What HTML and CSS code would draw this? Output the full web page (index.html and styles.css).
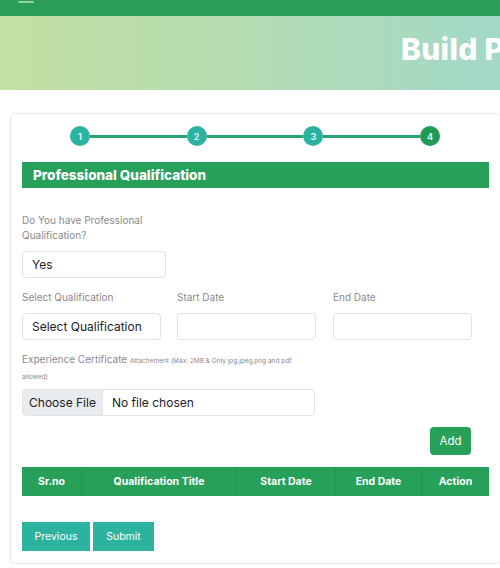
FILE: index.html
```html
<!DOCTYPE html>
<html lang="en">
    <head>
        <meta charset="UTF-8">
        <meta name="viewport" content="width=device-width, initial-scale=1.0">
        <title>Build Profile</title>
        <link rel="stylesheet" href="styles.css">
    </head>
    <body>
        <div class="topbar"><span class="menu-line"></span></div>
        <div class="hero">
            <h1>Build Profile</h1>
        </div>

        <div class="card">
            <div class="stepper">
                <span class="step">1</span>
                <span class="step-line"></span>
                <span class="step">2</span>
                <span class="step-line"></span>
                <span class="step">3</span>
                <span class="step-line"></span>
                <span class="step active">4</span>
            </div>

            <div class="section-title">Professional Qualification</div>

            <label class="field-label question">Do You have Professional Qualification?</label>
            <div class="box yes-box">Yes</div>

            <div class="row">
                <div class="col">
                    <label class="field-label">Select Qualification</label>
                    <div class="box">Select Qualification</div>
                </div>
                <div class="col">
                    <label class="field-label">Start Date</label>
                    <div class="box"></div>
                </div>
                <div class="col">
                    <label class="field-label">End Date</label>
                    <div class="box"></div>
                </div>
            </div>

            <label class="field-label cert-label">Experience Certificate <small>Attachement (Max: 2MB &amp; Only jpg,jpeg,png and pdf allowed)</small></label>
            <div class="file-box">
                <span class="file-btn">Choose File</span>
                <span class="file-name">No file chosen</span>
            </div>

            <div class="add-row">
                <button class="btn-add">Add</button>
            </div>

            <table class="qual-table">
                <thead>
                    <tr>
                        <th class="c1">Sr.no</th>
                        <th class="c2">Qualification Title</th>
                        <th class="c3">Start Date</th>
                        <th class="c4">End Date</th>
                        <th class="c5">Action</th>
                    </tr>
                </thead>
            </table>

            <div class="nav-buttons">
                <button class="btn-teal prev">Previous</button>
                <button class="btn-teal submit">Submit</button>
            </div>
        </div>
    </body>
</html>
```

FILE: styles.css
```css
body {
    margin: 0;
    font-family: Inter, "Noto Sans", sans-serif;
    background-color: #ffffff;
    overflow: hidden;
    width: 500px;
}

.topbar {
    height: 16px;
    background-color: #2a9d58;
    position: relative;
}

.menu-line {
    position: absolute;
    left: 18px;
    top: 1px;
    width: 16px;
    height: 2px;
    border-radius: 1px;
    background-color: #8fd3a8;
}

.hero {
    height: 74px;
    background: linear-gradient(90deg, #c3e0a3 0%, #b5dcb0 45%, #a3d9c8 100%);
    overflow: hidden;
}

.hero h1 {
    margin: 0;
    padding: 15px 0 0 401px;
    white-space: nowrap;
    color: #ffffff;
    font-size: 30px;
    font-weight: 800;
    letter-spacing: 0.3px;
}

.card {
    margin: 23px 0 0 10px;
    width: 467px;
    padding: 12px 11px 12px 11px;
    border: 1px solid #e8e8e8;
    border-radius: 5px;
    box-shadow: 0 1px 4px rgba(0, 0, 0, 0.06);
}

.stepper {
    display: flex;
    align-items: center;
    margin-left: 48px;
    width: 370px;
}

.step {
    width: 20px;
    height: 20px;
    border-radius: 50%;
    background-color: #2bb39f;
    color: #d9f3ee;
    font-size: 9px;
    font-weight: 700;
    display: flex;
    align-items: center;
    justify-content: center;
    flex-shrink: 0;
}

.step.active {
    background-color: #219a55;
}

.step-line {
    flex: 1;
    height: 3px;
    background-color: #27a472;
}

.section-title {
    margin-top: 16px;
    height: 26px;
    line-height: 26px;
    background-color: #27a05a;
    color: #ffffff;
    font-size: 13.5px;
    font-weight: 800;
    padding-left: 11px;
}

.field-label {
    display: block;
    font-size: 10px;
    line-height: 15px;
    color: #8a8a8a;
}

.question {
    margin-top: 25px;
    width: 140px;
}

.box {
    height: 25px;
    border: 1px solid #e2e2e2;
    border-radius: 4px;
    font-size: 12px;
    line-height: 25px;
    padding-left: 9px;
    color: #222;
    box-sizing: content-box;
}

.yes-box {
    margin-top: 8px;
    width: 133px;
}

.row {
    display: grid;
    grid-template-columns: 155px 156px 156px;
    margin-top: 12px;
}

.row .field-label {
    margin-bottom: 8px;
}

.row .box {
    width: 128px;
}

.cert-label {
    margin-top: 11px;
    line-height: 16px;
    width: 282px;
}

.cert-label small {
    font-size: 6.5px;
    line-height: 10px;
}

.file-box {
    margin-top: 6px;
    width: 291px;
    height: 25px;
    border: 1px solid #e2e2e2;
    border-radius: 4px;
    display: flex;
    overflow: hidden;
    font-size: 12px;
    color: #222;
}

.file-btn {
    width: 79px;
    background-color: #e9ecef;
    border-right: 1px solid #e2e2e2;
    text-align: center;
    line-height: 25px;
}

.file-name {
    padding-left: 9px;
    line-height: 25px;
}

.add-row {
    display: flex;
    justify-content: flex-end;
    padding-right: 18px;
    margin-top: 11px;
}

.btn-add {
    width: 41px;
    height: 28px;
    border: none;
    border-radius: 4px;
    background-color: #27a05a;
    color: #ffffff;
    font-family: inherit;
    font-size: 11.5px;
    padding: 0;
}

.qual-table {
    margin-top: 12px;
    width: 467px;
    border-collapse: collapse;
}

.qual-table th {
    height: 29px;
    padding: 0;
    background-color: #27a05a;
    color: #ffffff;
    font-size: 10.5px;
    font-weight: 700;
    text-align: center;
    border-right: 1px solid #239352;
}

.qual-table th:last-child {
    border-right: none;
}

.c1 { width: 59px; }
.c2 { width: 154px; }
.c3 { width: 98px; }
.c4 { width: 85px; }

.nav-buttons {
    display: flex;
    gap: 3px;
    margin-top: 26px;
}

.btn-teal {
    height: 29px;
    border: none;
    background-color: #2bb3a0;
    color: #ffffff;
    font-family: inherit;
    font-size: 10.5px;
    padding: 0;
}

.prev { width: 68px; }
.submit { width: 61px; }
```
